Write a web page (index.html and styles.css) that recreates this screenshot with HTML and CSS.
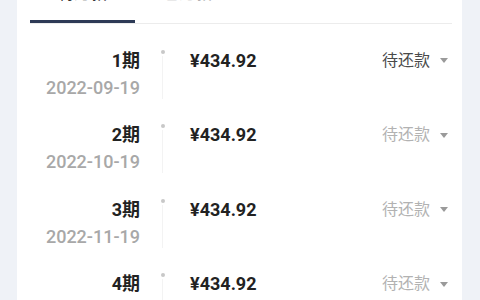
FILE: index.html
```html
<!DOCTYPE html>
<html lang="zh-CN">
<head>
<meta charset="utf-8">
<link rel="stylesheet" href="styles.css">
</head>
<body>
<div class="card">
  <div class="tabs">
    <div class="tab active">待还款</div>
    <div class="tab">已还款</div>
  </div>
  <div class="list">
    <div class="row">
      <div class="left"><div class="period">1期</div><div class="date">2022-09-19</div></div>
      <div class="timeline"><span class="dot"></span><span class="line"></span></div>
      <div class="content"><div class="amount">¥434.92</div><div class="status current">待还款<span class="caret"></span></div></div>
    </div>
    <div class="row">
      <div class="left"><div class="period">2期</div><div class="date">2022-10-19</div></div>
      <div class="timeline"><span class="dot"></span><span class="line"></span></div>
      <div class="content"><div class="amount">¥434.92</div><div class="status">待还款<span class="caret"></span></div></div>
    </div>
    <div class="row">
      <div class="left"><div class="period">3期</div><div class="date">2022-11-19</div></div>
      <div class="timeline"><span class="dot"></span><span class="line"></span></div>
      <div class="content"><div class="amount">¥434.92</div><div class="status">待还款<span class="caret"></span></div></div>
    </div>
    <div class="row">
      <div class="left"><div class="period">4期</div><div class="date">2022-12-19</div></div>
      <div class="timeline"><span class="dot"></span><span class="line"></span></div>
      <div class="content"><div class="amount">¥434.92</div><div class="status">待还款<span class="caret"></span></div></div>
    </div>
  </div>
</div>
</body>
</html>
```
FILE: styles.css
```css
html, body {
  margin: 0;
  padding: 0;
}
body {
  background: #eff2f7;
  font-family: Roboto, "Noto Sans CJK SC", sans-serif;
  overflow: hidden;
  height: 300px;
}
.card {
  background: #ffffff;
  margin: 0 18px 0 17px;
  padding: 0 10px 0 13px;
  height: 340px;
}
.tabs {
  display: flex;
  margin-top: -31px;
  border-bottom: 1px solid #ececec;
}
.tab {
  width: 105px;
  height: 54px;
  box-sizing: border-box;
  display: flex;
  align-items: center;
  justify-content: center;
  padding-bottom: 6px;
  font-size: 16px;
  color: #b0b0b0;
  border-bottom: 3px solid transparent;
}
.tab.active {
  color: #333;
  border-bottom-color: #2d3a56;
}
.list {
  padding-top: 23.5px;
}
.row {
  display: flex;
  height: 74.5px;
}
.left {
  width: 110px;
  text-align: right;
}
.period {
  font-size: 18px;
  font-weight: 700;
  color: #222;
  line-height: 26px;
}
.date {
  font-size: 18px;
  font-weight: 500;
  color: #a8a8a8;
  line-height: 26px;
  margin-top: 1px;
}
.timeline {
  width: 45px;
  display: flex;
  flex-direction: column;
  align-items: center;
  padding-top: 2px;
}
.dot {
  width: 4px;
  height: 4px;
  border-radius: 50%;
  background: #c8c8c8;
}
.line {
  width: 1px;
  height: 43px;
  margin-top: 2px;
  background: #f3f3f3;
}
.content {
  flex: 1;
  display: flex;
  justify-content: space-between;
  align-items: flex-start;
  padding-left: 5px;
  padding-right: 4px;
}
.amount {
  font-size: 18px;
  font-weight: 700;
  color: #222;
  line-height: 26px;
}
.status {
  display: flex;
  align-items: center;
  font-size: 16px;
  line-height: 26px;
  color: #b2b2b2;
}
.status.current {
  color: #4a4a4a;
}
.caret {
  width: 0;
  height: 0;
  margin-left: 10px;
  border-left: 4px solid transparent;
  border-right: 4px solid transparent;
  border-top: 5px solid #9a9a9a;
}
```
